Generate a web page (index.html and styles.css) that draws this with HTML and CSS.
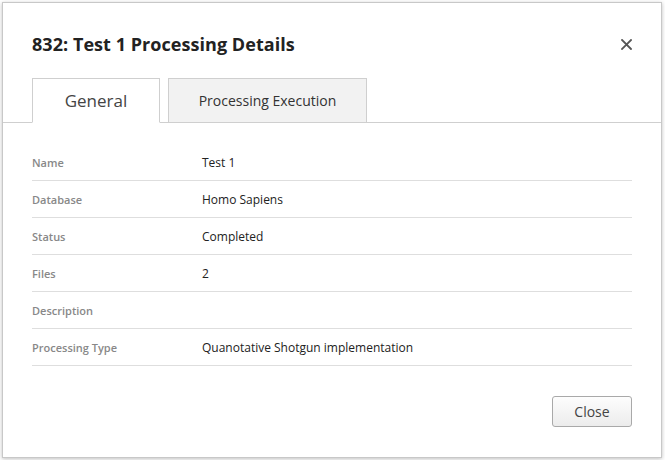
FILE: index.html
```html
<!DOCTYPE html>
<html>
<head>
<meta charset="utf-8">
<link rel="stylesheet" href="styles.css">
</head>
<body>
<div class="modal">
  <div class="header">
    <h1 class="title">832: Test 1 Processing Details</h1>
    <span class="close-x" aria-label="Close">
      <svg width="11" height="11" viewBox="0 0 11 11"><path d="M1 1L10 10M10 1L1 10" stroke="#555" stroke-width="1.8" stroke-linecap="square"/></svg>
    </span>
  </div>
  <div class="tabs">
    <div class="tab active">General</div>
    <div class="tab">Processing Execution</div>
  </div>
  <div class="body">
    <div class="row"><div class="label">Name</div><div class="value">Test 1</div></div>
    <div class="row"><div class="label">Database</div><div class="value">Homo Sapiens</div></div>
    <div class="row"><div class="label">Status</div><div class="value">Completed</div></div>
    <div class="row"><div class="label">Files</div><div class="value">2</div></div>
    <div class="row"><div class="label">Description</div><div class="value"></div></div>
    <div class="row"><div class="label">Processing Type</div><div class="value">Quanotative Shotgun implementation</div></div>
  </div>
  <div class="footer">
    <button class="btn">Close</button>
  </div>
</div>
</body>
</html>
```

FILE: styles.css
```css
html, body {
  margin: 0;
  padding: 0;
  background: #ffffff;
}
body {
  padding: 2px;
  font-family: "Open Sans", "Noto Sans", sans-serif;
}
.modal {
  width: 658px;
  height: 454px;
  border: 1px solid #c8c8c8;
  background: #fff;
  box-shadow: 0 1px 4px rgba(0,0,0,0.25);
  display: flex;
  flex-direction: column;
}
.header {
  display: flex;
  align-items: center;
  justify-content: space-between;
  padding: 28px 29px 0 29px;
  height: 26px;
}
.title {
  margin: 0;
  font-size: 18px;
  font-weight: 700;
  color: #222;
  line-height: 26px;
  letter-spacing: 0.05px;
}
.close-x {
  display: flex;
  width: 11px;
  height: 11px;
}
.tabs {
  display: flex;
  gap: 8px;
  padding-left: 29px;
  margin-top: 21px;
  border-bottom: 1px solid #cfcfcf;
  height: 44px;
}
.tab {
  box-sizing: border-box;
  height: 45px;
  border: 1px solid #cfcfcf;
  display: flex;
  align-items: center;
  justify-content: center;
  color: #333;
  background: #f2f2f2;
  font-size: 14px;
  width: 199px;
}
.tab.active {
  width: 128px;
  background: #fff;
  border-bottom-color: #fff;
  font-size: 17px;
  color: #444;
}
.body {
  padding: 21px 29px 0 29px;
}
.row {
  display: flex;
  align-items: center;
  height: 36px;
  border-bottom: 1px solid #dedede;
}
.label {
  width: 170px;
  font-size: 11px;
  font-weight: 600;
  color: #888;
}
.value {
  font-size: 12px;
  color: #222;
}
.footer {
  display: flex;
  justify-content: flex-end;
  padding: 30px 29px 0 0;
}
.btn {
  width: 80px;
  height: 31px;
  border: 1px solid #a9a9a9;
  border-radius: 3px;
  background: linear-gradient(#fdfdfd, #ececec);
  font-family: "Open Sans", "Noto Sans", sans-serif;
  font-size: 14px;
  color: #444;
  padding: 0;
}
```
